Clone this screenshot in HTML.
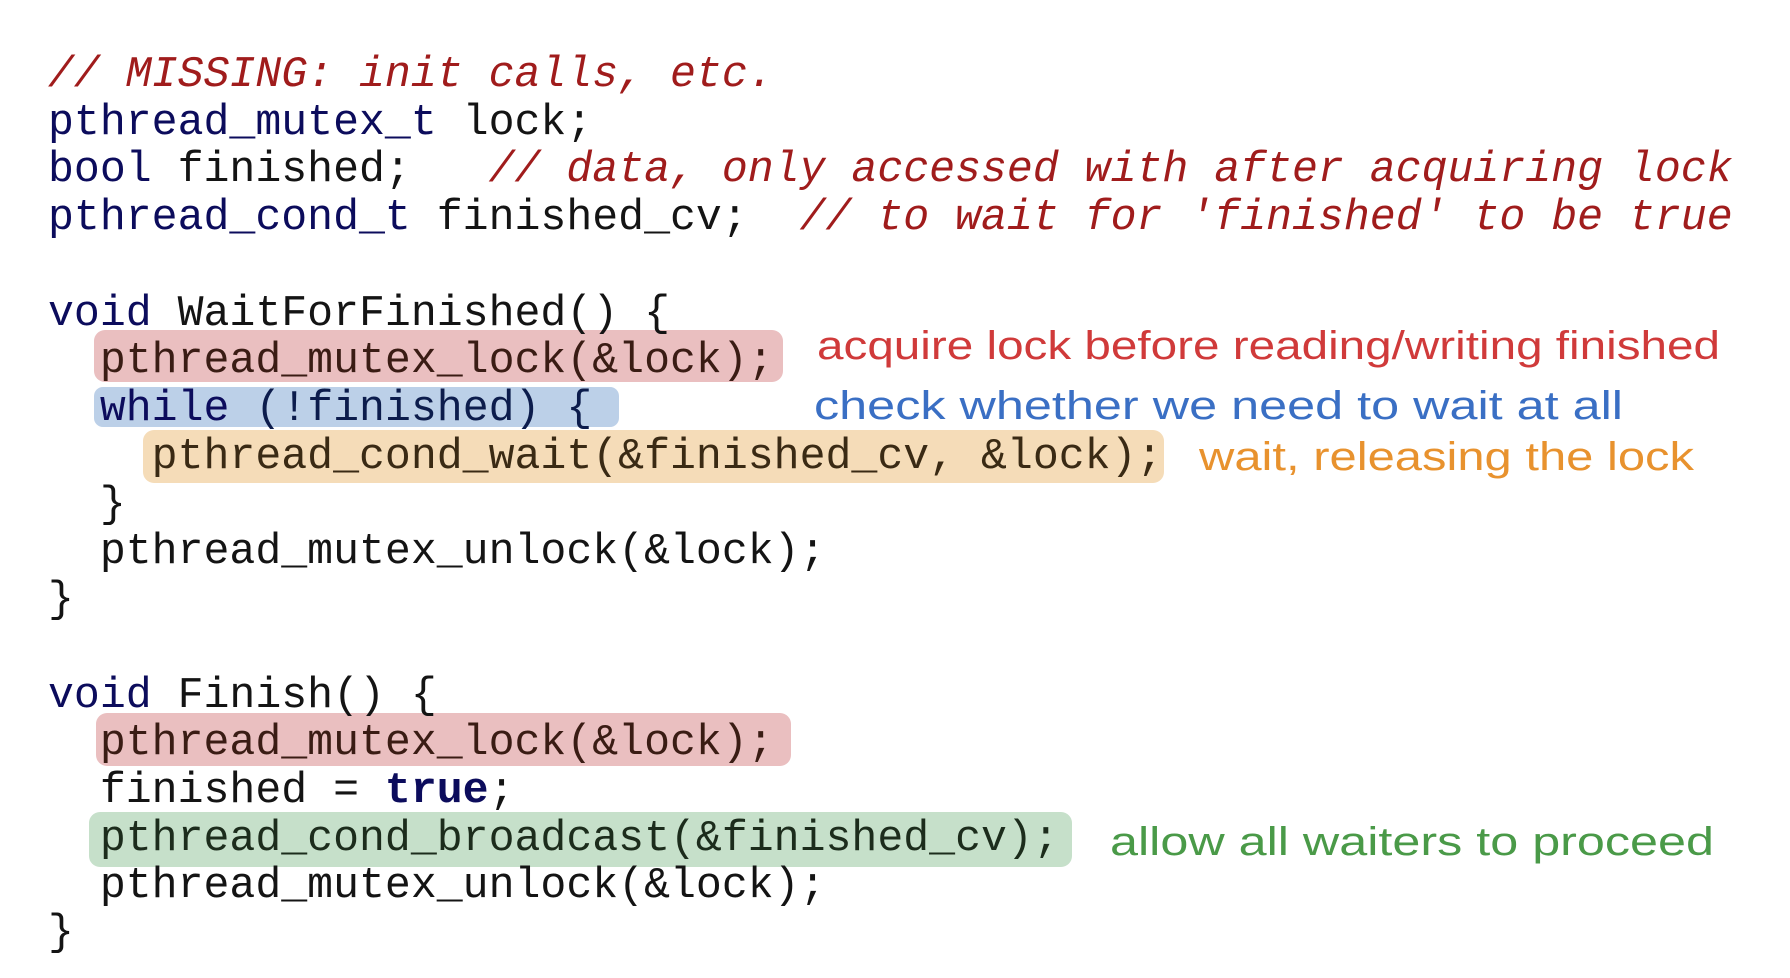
<!DOCTYPE html>
<html><head><meta charset="utf-8"><style>
html,body{margin:0;padding:0;background:#fff;width:1790px;height:978px;overflow:hidden}
svg{display:block}
.c{font-family:"Liberation Mono","DejaVu Sans Mono",monospace;font-size:43.2px;fill:#141414}
.k{fill:#0c0c5c}
.cm{fill:#a01c1c;font-style:italic}
.a{font-family:"Liberation Sans","DejaVu Sans",sans-serif;font-size:40px}
</style></head><body>
<svg width="1790" height="978" xmlns="http://www.w3.org/2000/svg">
<rect x="94" y="330" width="689" height="52" rx="11" fill="#eabfc0"/>
<rect x="94" y="387" width="525" height="40" rx="9" fill="#bcd0e8"/>
<rect x="143" y="430" width="1021" height="53" rx="11" fill="#f5dcb8"/>
<rect x="96" y="713" width="695" height="53" rx="11" fill="#eabfc0"/>
<rect x="89" y="812" width="983" height="55" rx="11" fill="#c6e0ca"/>
<g class="c">
<text x="48" y="86" class="cm">//&#160;MISSING:&#160;init&#160;calls,&#160;etc.</text>
<text x="48" y="134"><tspan class="k">pthread_mutex_t</tspan>&#160;lock;</text>
<text x="48" y="181"><tspan class="k">bool</tspan>&#160;finished;&#160;&#160;&#160;<tspan class="cm">//&#160;data,&#160;only&#160;accessed&#160;with&#160;after&#160;acquiring&#160;lock</tspan></text>
<text x="48" y="229"><tspan class="k">pthread_cond_t</tspan>&#160;finished_cv;&#160;&#160;<tspan class="cm">//&#160;to&#160;wait&#160;for&#160;'finished'&#160;to&#160;be&#160;true</tspan></text>
<text x="48" y="325"><tspan class="k">void</tspan>&#160;WaitForFinished()&#160;{</text>
<text x="48" y="372" fill="#3a1c14">&#160;&#160;pthread_mutex_lock(&amp;lock);</text>
<text x="48" y="420">&#160;&#160;<tspan class="k">while</tspan>&#160;<tspan fill="#0c1c4c">(!finished)&#160;{</tspan></text>
<text x="48" y="468" fill="#3a2a14">&#160;&#160;&#160;&#160;pthread_cond_wait(&amp;finished_cv,&#160;&amp;lock);</text>
<text x="48" y="516">&#160;&#160;}</text>
<text x="48" y="563">&#160;&#160;pthread_mutex_unlock(&amp;lock);</text>
<text x="48" y="611">}</text>
<text x="48" y="707"><tspan class="k">void</tspan>&#160;Finish()&#160;{</text>
<text x="48" y="754" fill="#3a1c14">&#160;&#160;pthread_mutex_lock(&amp;lock);</text>
<text x="48" y="802">&#160;&#160;finished&#160;=&#160;<tspan class="k" font-weight="bold">true</tspan>;</text>
<text x="48" y="850" fill="#1c2c1c">&#160;&#160;pthread_cond_broadcast(&amp;finished_cv);</text>
<text x="48" y="897">&#160;&#160;pthread_mutex_unlock(&amp;lock);</text>
<text x="48" y="944">}</text>
</g>
<text class="a" x="817" y="359" fill="#d03a3a" textLength="903" lengthAdjust="spacingAndGlyphs">acquire lock before reading/writing finished</text>
<text class="a" x="814" y="419" fill="#3a6fc4" textLength="809" lengthAdjust="spacingAndGlyphs">check whether we need to wait at all</text>
<text class="a" x="1199" y="470" fill="#e8922e" textLength="495" lengthAdjust="spacingAndGlyphs">wait, releasing the lock</text>
<text class="a" x="1110" y="855" fill="#4a9a48" textLength="604" lengthAdjust="spacingAndGlyphs">allow all waiters to proceed</text>
</svg>
</body></html>
